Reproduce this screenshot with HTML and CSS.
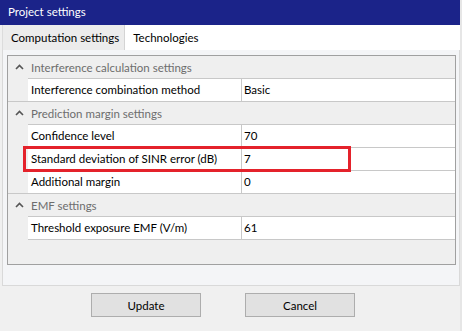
FILE: index.html
```html
<!DOCTYPE html>
<html>
<head>
<meta charset="utf-8">
<link rel="stylesheet" href="styles.css">
</head>
<body>
<div class="window">
  <div class="titlebar">Project settings</div>
  <div class="tabstrip">
    <div class="tab active">Computation settings</div>
    <div class="tab">Technologies</div>
  </div>
  <div class="tabpage">
    <div class="grid">
      <div class="cat first">
        <span class="chev"><svg width="9" height="6" viewBox="0 0 9 6"><polyline points="1,5 4.5,1.5 8,5" fill="none" stroke="#555" stroke-width="1.6"/></svg></span>
        <span class="cat-label">Interference calculation settings</span>
      </div>
      <div class="prop">
        <div class="name">Interference combination method</div>
        <div class="value">Basic</div>
      </div>
      <div class="cat">
        <span class="chev"><svg width="9" height="6" viewBox="0 0 9 6"><polyline points="1,5 4.5,1.5 8,5" fill="none" stroke="#555" stroke-width="1.6"/></svg></span>
        <span class="cat-label">Prediction margin settings</span>
      </div>
      <div class="prop">
        <div class="name">Confidence level</div>
        <div class="value">70</div>
      </div>
      <div class="prop">
        <div class="name">Standard deviation of SINR error (dB)</div>
        <div class="value">7</div>
      </div>
      <div class="prop">
        <div class="name">Additional margin</div>
        <div class="value">0</div>
      </div>
      <div class="cat">
        <span class="chev"><svg width="9" height="6" viewBox="0 0 9 6"><polyline points="1,5 4.5,1.5 8,5" fill="none" stroke="#555" stroke-width="1.6"/></svg></span>
        <span class="cat-label">EMF settings</span>
      </div>
      <div class="prop last">
        <div class="name">Threshold exposure EMF (V/m)</div>
        <div class="value">61</div>
      </div>
      <div class="highlight"></div>
    </div>
  </div>
  <div class="buttons">
    <button class="btn">Update</button>
    <button class="btn">Cancel</button>
  </div>
</div>
</body>
</html>
```
FILE: styles.css
```css
* { box-sizing: border-box; }
html, body { margin: 0; padding: 0; }
body {
  width: 462px;
  height: 331px;
  overflow: hidden;
  background: #f0f0f0;
  font-family: Lato, "Noto Sans", sans-serif;
  font-size: 11.5px;
  color: #000;
}
.window {
  width: 462px;
  height: 331px;
  border-right: 2px solid #e6e6e6;
}
.titlebar {
  height: 25px;
  background: #1b2389;
  color: #fff;
  padding-left: 8px;
  line-height: 24px;
}
.tabstrip {
  display: flex;
  height: 25px;
  margin: 0 0 0 2px;
  background: #fff;
  border-left: 1px solid #dcdcdc;
}
.tab {
  padding: 0 8px;
  line-height: 25px;
  color: #000;
}
.tab.active {
  background: #ececec;
  border-right: 1px solid #d4d4d4;
  padding: 0 5px 0 8px;
}
.tabpage {
  margin-left: 2px;
  width: 458px;
  height: 236px;
  background: #f4f5f7;
  border: 1px solid #d9d9d9;
  border-top: none;
  padding: 5px 0 0 4px;
}
.grid {
  position: relative;
  width: 449px;
  height: 210px;
  background: #efefef;
  border: 1px solid #a0a0a0;
}
.cat {
  display: flex;
  align-items: center;
  height: 23px;
  border-top: 1px solid #c8c8c8;
  color: #6d6d6d;
}
.cat.first {
  height: 22px;
  border-top: none;
}
.chev {
  width: 23px;
  padding-left: 7px;
  display: flex;
  align-items: center;
}
.prop {
  display: flex;
  height: 23px;
  padding-left: 20px;
}
.prop .name,
.prop .value {
  background: #fff;
  border-top: 1px solid #c8c8c8;
  line-height: 22px;
  white-space: nowrap;
}
.prop.last .name,
.prop.last .value {
  height: 24px;
  border-bottom: 1px solid #c8c8c8;
}
.prop .name {
  width: 214px;
  padding-left: 3px;
  border-right: 1px solid #c8c8c8;
}
.prop .value {
  flex: 1;
  padding-left: 2px;
}
.highlight {
  position: absolute;
  left: 15px;
  top: 90px;
  width: 328px;
  height: 26px;
  border: 3px solid #e4222b;
}
.buttons {
  display: flex;
  gap: 44px;
  padding: 7px 0 0 91px;
}
.btn {
  width: 110px;
  height: 24px;
  background: #e1e1e1;
  border: 1px solid #adadad;
  font-family: Lato, "Noto Sans", sans-serif;
  font-size: 11.5px;
  color: #000;
  padding: 0;
}
```
